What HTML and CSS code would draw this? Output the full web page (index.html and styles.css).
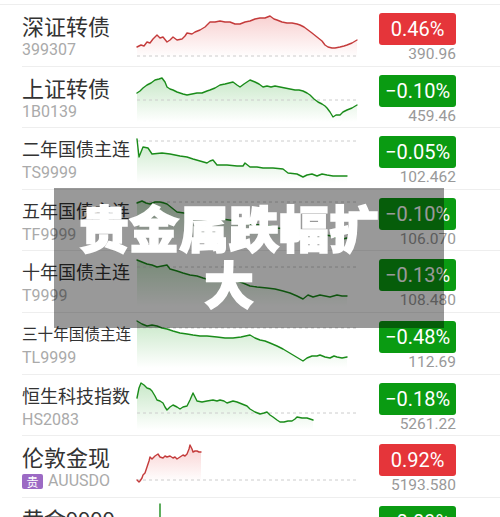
FILE: index.html
```html
<!DOCTYPE html>
<html lang="zh">
<head>
<meta charset="utf-8">
<link rel="stylesheet" href="styles.css">
</head>
<body>
<svg width="0" height="0" class="defs">
  <defs>
    <linearGradient id="gr" x1="0" y1="0" x2="0" y2="1">
      <stop offset="0" stop-color="#e85a5a" stop-opacity="0.28"/>
      <stop offset="1" stop-color="#e85a5a" stop-opacity="0"/>
    </linearGradient>
    <linearGradient id="gg" x1="0" y1="0" x2="0" y2="1">
      <stop offset="0" stop-color="#3cae3c" stop-opacity="0.28"/>
      <stop offset="1" stop-color="#3cae3c" stop-opacity="0"/>
    </linearGradient>
  </defs>
</svg>
<div class="list">
  <div class="row">
    <div class="info"><div class="name">深证转债</div><div class="code">399307</div></div>
    <svg class="chart" viewBox="0 0 220 52">
      <polygon fill="url(#gr)" points="0,37 4,35 7,36 10,32 13,33 16,29 20,25 23,28 26,27 30,32 33,30 36,27 40,30 45,29 48,26 50,23 55,24 58,22 63,20 68,17 73,12 78,12 83,11 88,12 93,12 98,14 103,14 108,12 113,11 118,9 123,8 128,8 133,6 137,9 140,10 145,12 150,13 155,13 160,14 163,15 167,17 171,20 175,23 180,27 185,31 188,35 191,37 195,38 198,38 203,37 207,36 210,35 215,33 220,30 220,48 0,48"/>
      <line class="base" x1="0" y1="46" x2="220" y2="46"/>
      <polyline class="ln red" points="0,37 4,35 7,36 10,32 13,33 16,29 20,25 23,28 26,27 30,32 33,30 36,27 40,30 45,29 48,26 50,23 55,24 58,22 63,20 68,17 73,12 78,12 83,11 88,12 93,12 98,14 103,14 108,12 113,11 118,9 123,8 128,8 133,6 137,9 140,10 145,12 150,13 155,13 160,14 163,15 167,17 171,20 175,23 180,27 185,31 188,35 191,37 195,38 198,38 203,37 207,36 210,35 215,33 220,30"/>
    </svg>
    <div class="quote"><div class="badge up">0.46%</div><div class="price">390.96</div></div>
  </div>

  <div class="row">
    <div class="info"><div class="name">上证转债</div><div class="code">1B0139</div></div>
    <svg class="chart" viewBox="0 0 220 52">
      <polygon fill="url(#gg)" points="0,21 3,19 6,16 10,13 14,11 18,8 22,7 25,6 28,10 30,15 33,17 36,18 40,20 43,21 46,22 50,23 55,22 60,21 65,21 70,19 73,18 78,16 83,13 88,12 92,11 96,10 100,13 103,15 107,12 113,8 118,10 122,12 126,15 130,14 134,15 138,14 143,15 148,16 153,17 158,18 162,18 166,19 170,21 173,23 177,27 181,30 185,32 188,34 190,36 193,40 196,45 199,43 203,43 206,40 210,38 215,36 220,33 220,50 0,50"/>
      <line class="base" x1="0" y1="28" x2="220" y2="28"/>
      <polyline class="ln green" points="0,21 3,19 6,16 10,13 14,11 18,8 22,7 25,6 28,10 30,15 33,17 36,18 40,20 43,21 46,22 50,23 55,22 60,21 65,21 70,19 73,18 78,16 83,13 88,12 92,11 96,10 100,13 103,15 107,12 113,8 118,10 122,12 126,15 130,14 134,15 138,14 143,15 148,16 153,17 158,18 162,18 166,19 170,21 173,23 177,27 181,30 185,32 188,34 190,36 193,40 196,45 199,43 203,43 206,40 210,38 215,36 220,33"/>
    </svg>
    <div class="quote"><div class="badge down">−0.10%</div><div class="price">459.46</div></div>
  </div>

  <div class="row">
    <div class="info"><div class="name name-m">二年国债主连</div><div class="code">TS9999</div></div>
    <svg class="chart" viewBox="0 0 220 52">
      <polygon fill="url(#gg)" points="0,6 2,24 6,14 11,15 15,21 25,20 33,21 38,22 43,23 50,24 56,26 63,28 70,30 73,28 76,27 80,32 90,32 100,33 106,33 108,30 113,34 120,34 126,35 136,35 146,36 151,40 160,41 166,44 170,42 175,41 180,43 185,41 190,42 196,43 203,43 210,43 210,50 0,50"/>
      <line class="base" x1="0" y1="8" x2="220" y2="8"/>
      <polyline class="ln green" points="0,6 2,24 6,14 11,15 15,21 25,20 33,21 38,22 43,23 50,24 56,26 63,28 70,30 73,28 76,27 80,32 90,32 100,33 106,33 108,30 113,34 120,34 126,35 136,35 146,36 151,40 160,41 166,44 170,42 175,41 180,43 185,41 190,42 196,43 203,43 210,43"/>
    </svg>
    <div class="quote"><div class="badge down">−0.05%</div><div class="price">102.462</div></div>
  </div>

  <div class="row">
    <div class="info"><div class="name name-m">五年国债主连</div><div class="code">TF9999</div></div>
    <svg class="chart" viewBox="0 0 220 52">
      <polygon fill="url(#gg)" points="0,8 5,6 9,8 13,9 18,7 23,7 27,8 30,9 35,13 40,17 47,18 55,20 62,21 70,22 78,23 85,24 92,25 100,26 106,28 113,29 123,30 133,31 140,33 150,34 158,35 165,36 172,38 180,40 188,40 195,41 200,43 206,44 210,43 210,50 0,50"/>
      <line class="base" x1="0" y1="7" x2="220" y2="7"/>
      <polyline class="ln green" points="0,8 5,6 9,8 13,9 18,7 23,7 27,8 30,9 35,13 40,17 47,18 55,20 62,21 70,22 78,23 85,24 92,25 100,26 106,28 113,29 123,30 133,31 140,33 150,34 158,35 165,36 172,38 180,40 188,40 195,41 200,43 206,44 210,43"/>
    </svg>
    <div class="quote"><div class="badge down">−0.10%</div><div class="price">106.070</div></div>
  </div>

  <div class="row">
    <div class="info"><div class="name name-m">十年国债主连</div><div class="code">T9999</div></div>
    <svg class="chart" viewBox="0 0 220 52">
      <polygon fill="url(#gg)" points="0,4 5,6 10,8 15,9 20,11 25,10 30,9 33,13 40,15 46,17 53,19 60,20 66,22 73,24 80,25 86,25 93,25 100,25 106,27 113,30 120,31 130,32 138,33 146,35 153,37 160,40 166,43 171,39 176,41 183,39 188,40 193,41 200,39 205,40 210,40 210,50 0,50"/>
      <line class="base" x1="0" y1="11" x2="220" y2="11"/>
      <polyline class="ln green" points="0,4 5,6 10,8 15,9 20,11 25,10 30,9 33,13 40,15 46,17 53,19 60,20 66,22 73,24 80,25 86,25 93,25 100,25 106,27 113,30 120,31 130,32 138,33 146,35 153,37 160,40 166,43 171,39 176,41 183,39 188,40 193,41 200,39 205,40 210,40"/>
    </svg>
    <div class="quote"><div class="badge down">−0.13%</div><div class="price">108.480</div></div>
  </div>

  <div class="row">
    <div class="info"><div class="name name-s">三十年国债主连</div><div class="code">TL9999</div></div>
    <svg class="chart" viewBox="0 0 220 52">
      <polygon fill="url(#gg)" points="0,3 5,6 10,8 15,7 20,8 25,10 30,11 36,13 43,15 50,16 56,17 63,18 70,18 80,19 88,20 96,20 104,19 113,17 118,20 123,22 128,23 133,25 140,28 146,31 151,34 156,37 161,40 166,43 170,40 175,38 180,38 183,37 188,39 193,40 197,38 200,39 205,40 210,39 210,50 0,50"/>
      <line class="base" x1="0" y1="10" x2="220" y2="10"/>
      <polyline class="ln green" points="0,3 5,6 10,8 15,7 20,8 25,10 30,11 36,13 43,15 50,16 56,17 63,18 70,18 80,19 88,20 96,20 104,19 113,17 118,20 123,22 128,23 133,25 140,28 146,31 151,34 156,37 161,40 166,43 170,40 175,38 180,38 183,37 188,39 193,40 197,38 200,39 205,40 210,39"/>
    </svg>
    <div class="quote"><div class="badge down">−0.48%</div><div class="price">112.69</div></div>
  </div>

  <div class="row">
    <div class="info"><div class="name name-m">恒生科技指数</div><div class="code">HS2083</div></div>
    <svg class="chart" viewBox="0 0 220 52">
      <polygon fill="url(#gg)" points="0,18 2,8 4,3 7,5 10,8 13,9 15,11 18,16 20,20 23,21 26,23 28,27 30,30 33,27 36,25 40,27 43,29 46,27 50,26 53,20 56,13 58,17 60,21 65,22 70,21 76,20 80,21 83,20 87,21 90,23 93,22 96,21 100,22 105,24 110,26 113,29 118,32 123,34 127,33 130,32 133,35 136,37 140,40 143,42 147,42 151,41 155,41 158,39 160,37 165,38 170,38 173,39 176,40 176,50 0,50"/>
      <line class="base" x1="0" y1="33" x2="220" y2="33"/>
      <polyline class="ln green" points="0,18 2,8 4,3 7,5 10,8 13,9 15,11 18,16 20,20 23,21 26,23 28,27 30,30 33,27 36,25 40,27 43,29 46,27 50,26 53,20 56,13 58,17 60,21 65,22 70,21 76,20 80,21 83,20 87,21 90,23 93,22 96,21 100,22 105,24 110,26 113,29 118,32 123,34 127,33 130,32 133,35 136,37 140,40 143,42 147,42 151,41 155,41 158,39 160,37 165,38 170,38 173,39 176,40"/>
    </svg>
    <div class="quote"><div class="badge down">−0.18%</div><div class="price">5261.22</div></div>
  </div>

  <div class="row">
    <div class="info"><div class="name">伦敦金现</div><div class="code"><span class="tag">贵</span>AUUSDO</div></div>
    <svg class="chart" viewBox="0 0 220 52">
      <polygon fill="url(#gr)" points="0,39 2,41 3,40 5,37 6,34 8,32 10,26 12,20 13,16 15,18 16,17 18,15 21,13 23,16 26,17 28,15 30,16 33,15 36,17 38,16 40,18 43,16 46,14 48,15 50,13 52,8 53,4 55,8 56,11 58,10 60,10 62,11 64,11 64,40 0,40"/>
      <line class="base" x1="0" y1="39" x2="220" y2="39"/>
      <polyline class="ln red" points="0,39 2,41 3,40 5,37 6,34 8,32 10,26 12,20 13,16 15,18 16,17 18,15 21,13 23,16 26,17 28,15 30,16 33,15 36,17 38,16 40,18 43,16 46,14 48,15 50,13 52,8 53,4 55,8 56,11 58,10 60,10 62,11 64,11"/>
    </svg>
    <div class="quote"><div class="badge up">0.92%</div><div class="price">5193.580</div></div>
  </div>

  <div class="row">
    <div class="info"><div class="name">黄金9999</div><div class="code">AU9999</div></div>
    <svg class="chart" viewBox="0 0 220 52">
      <polyline class="ln green" points="23,1 23,30"/>
    </svg>
    <div class="quote"><div class="badge down">−0.09%</div><div class="price">0.00</div></div>
  </div>
</div>

<div class="overlay">贵金属跌幅扩大</div>
</body>
</html>
```

FILE: styles.css
```css
html, body {
  margin: 0;
  padding: 0;
  background: #ffffff;
  overflow: hidden;
}

body {
  width: 500px;
  height: 517px;
  position: relative;
  font-family: "Noto Sans CJK SC", "Noto Sans", sans-serif;
}

.defs {
  position: absolute;
  width: 0;
  height: 0;
}

.list {
  margin-top: 4px;
  border-top: 1px solid #eeeeee;
}

.row {
  box-sizing: border-box;
  height: 61.6px;
  margin-left: 22px;
  border-bottom: 1px solid #eeeeee;
  display: grid;
  grid-template-columns: 115px 220px 99px;
  column-gap: 0;
  align-items: start;
}

.info {
  padding-top: 6px;
  min-width: 0;
}

.name {
  font-size: 22px;
  line-height: 28px;
  height: 28px;
  color: #333333;
  white-space: nowrap;
}

.name-m {
  font-size: 18px;
}

.name-s {
  font-size: 15.6px;
}

.code {
  margin-top: 1px;
  font-family: Roboto, "Noto Sans", sans-serif;
  font-size: 16px;
  line-height: 20px;
  color: #aaaaaa;
  display: flex;
  align-items: center;
}

.tag {
  display: inline-block;
  width: 21px;
  height: 15px;
  line-height: 15px;
  margin-right: 5px;
  background: #9c6ac4;
  color: #ffffff;
  border-radius: 2px;
  font-family: "Noto Sans CJK SC", sans-serif;
  font-size: 12px;
  text-align: center;
}

.chart {
  display: block;
  width: 220px;
  height: 52px;
  margin-top: 5px;
  overflow: visible;
}

.base {
  stroke: #cccccc;
  stroke-width: 1;
  stroke-dasharray: 3 3;
}

.ln {
  fill: none;
  stroke-width: 1.4;
  stroke-linejoin: round;
  stroke-linecap: round;
}

.ln.red { stroke: #c43b3b; }
.ln.green { stroke: #1a8c1a; }

.quote {
  margin-left: 22px;
  padding-top: 8px;
  display: flex;
  flex-direction: column;
  align-items: stretch;
}

.badge {
  height: 32px;
  line-height: 32px;
  border-radius: 3px;
  text-align: center;
  color: #ffffff;
  font-family: Roboto, "Noto Sans", sans-serif;
  font-size: 20px;
}

.badge.up { background: #e5353a; }
.badge.down { background: #0a9b12; }

.price {
  text-align: right;
  font-family: Roboto, "Noto Sans", sans-serif;
  font-size: 15.5px;
  line-height: 19px;
  color: #999999;
}

.overlay {
  position: absolute;
  left: 54px;
  top: 188px;
  width: 390px;
  height: 140px;
  box-sizing: border-box;
  padding: 10px 64px 0 24px;
  background: rgba(0, 0, 0, 0.4);
  color: #ffffff;
  font-family: "Noto Sans CJK SC", sans-serif;
  font-weight: 900;
  font-size: 50px;
  line-height: 56px;
  text-align: center;
  -webkit-text-stroke: 1.5px #ffffff;
}
```
